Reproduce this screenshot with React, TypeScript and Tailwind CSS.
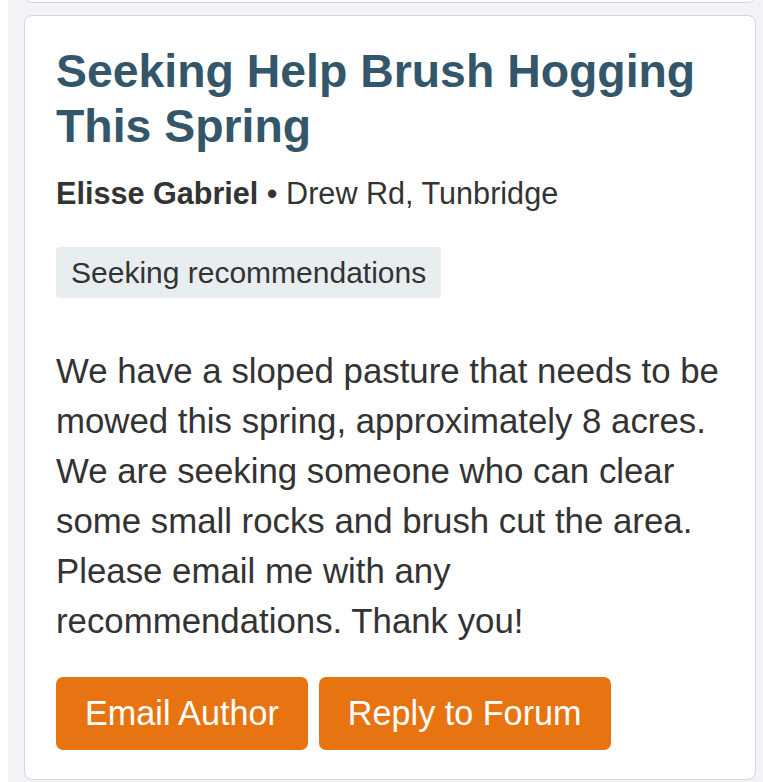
export default function App() {
  return (
    <div
      className="min-h-screen bg-white pl-[8px]"
      style={{ fontFamily: '"Liberation Sans", Arial, Helvetica, sans-serif' }}
    >
      <div className="min-h-[782px] overflow-hidden bg-[#f2f2f7] pl-[16px] pr-[7px]">
        <div className="-mt-[20px] h-[23px] rounded-b-[8px] border border-[#d6d6e0] bg-white" />
        <div className="mt-[12px] rounded-[8px] border border-[#d6d6e0] bg-white px-[31px] pt-[28px] pb-[29px]">
          <h1 className="text-[46.4px] font-bold leading-[55px] text-[#34566a]">
            Seeking Help Brush Hogging This Spring
          </h1>
          <p className="mt-[21px] text-[30.6px] leading-[36px] text-[#333333]">
            <span className="font-bold">Elisse Gabriel</span> • Drew Rd, Tunbridge
          </p>
          <div className="mt-[36px] flex">
            <span className="rounded-[4px] bg-[#e8edf0] px-[15px] py-[8px] text-[30px] leading-[35px] text-[#333333]">
              Seeking recommendations
            </span>
          </div>
          <p className="mt-[48px] text-[34.8px] leading-[50px] text-[#333333]">
            We have a sloped pasture that needs to be mowed this spring, approximately 8 acres. We are
            seeking someone who can clear some small rocks and brush cut the area. Please email me with
            any recommendations. Thank you!
          </p>
          <div className="mt-[31px] flex gap-[11px]">
            <button className="h-[73px] rounded-[7px] bg-[#e87411] px-[29px] text-[34.2px] leading-[41px] text-white">
              Email Author
            </button>
            <button className="h-[73px] rounded-[7px] bg-[#e87411] px-[29px] text-[34.2px] leading-[41px] text-white">
              Reply to Forum
            </button>
          </div>
        </div>
      </div>
    </div>
  );
}
